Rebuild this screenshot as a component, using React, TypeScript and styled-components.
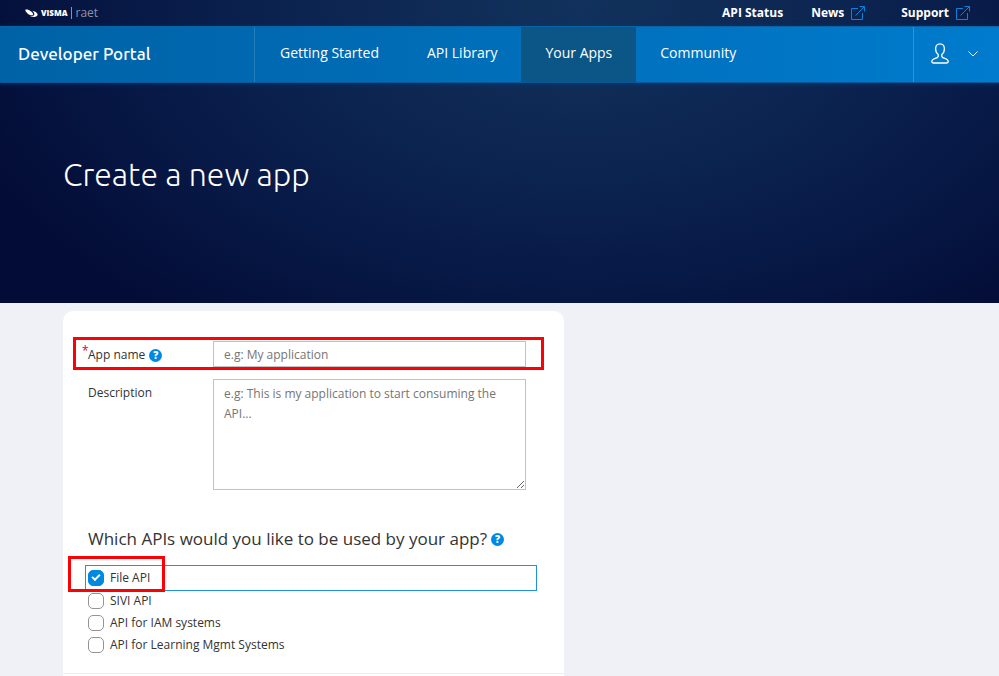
import React, { useState } from 'react';
import styled, { createGlobalStyle } from 'styled-components';

const Global = createGlobalStyle`
  *, *::before, *::after { box-sizing: border-box; }
  body {
    margin: 0;
    background: #f0f1f6;
    color: #333;
    font-family: "Open Sans", "Noto Sans", sans-serif;
    font-size: 12px;
    line-height: 20px;
  }
`;

const Page = styled.div`
  display: flex;
  flex-direction: column;
  min-height: 100vh;
`;

const Header = styled.header`
  background: radial-gradient(ellipse 65% 132% at 58% 2%, #11325c 0%, #0c2450 42%, #071845 72%, #030c36 100%);
`;

const TopBar = styled.div`
  display: flex;
  align-items: center;
  justify-content: space-between;
  height: 26px;
  padding: 0 29px 0 25px;
`;

const Brand = styled.a`
  display: flex;
  align-items: center;
  color: #fff;
  text-decoration: none;
`;

const BrandName = styled.span`
  margin-left: 3px;
  font-size: 8px;
  font-weight: 800;
  line-height: 12px;
`;

const BrandUnit = styled.span`
  margin-left: 3px;
  padding-left: 4px;
  border-left: 1px solid #8b93a9;
  color: #8b93a9;
  font-size: 12px;
  line-height: 12px;
`;

const TopLinks = styled.div`
  display: flex;
  gap: 28px;
`;

const TopLink = styled.a<{ $wide?: boolean }>`
  display: flex;
  align-items: center;
  gap: 6px;
  margin-left: ${(p) => (p.$wide ? 8 : 0)}px;
  color: #fff;
  font-weight: 700;
  text-decoration: none;
`;

const NavBar = styled.nav`
  display: flex;
  height: 57px;
  border-top: 1px solid #0a63a5;
  border-bottom: 1px solid #07599b;
  background: linear-gradient(90deg, #0062a6, #007bcd);
  box-shadow: 0 1px 5px rgba(0, 80, 150, 0.45);
`;

const PortalLink = styled.a`
  display: flex;
  align-items: center;
  width: 255px;
  padding: 0 0 2px 18px;
  border-right: 1px solid rgba(255, 255, 255, 0.14);
  color: #fff;
  font-family: Ubuntu, "Noto Sans", sans-serif;
  font-size: 17px;
  font-weight: 500;
  text-decoration: none;
`;

const NavLinks = styled.div`
  display: flex;
  padding-left: 1px;
`;

const NavLink = styled.a<{ $active?: boolean }>`
  display: flex;
  align-items: center;
  padding: 0 24px 3px;
  background: ${(p) => (p.$active ? '#0b5686' : 'transparent')};
  color: #fff;
  font-size: 14px;
  text-decoration: none;
`;

const UserButton = styled.button`
  display: flex;
  align-items: center;
  justify-content: space-between;
  width: 86px;
  margin-left: auto;
  padding: 0 21px 2px 17px;
  border: 0;
  border-left: 1px solid rgba(255, 255, 255, 0.2);
  background: transparent;
  color: #fff;
`;

const Hero = styled.div`
  height: 220px;
  padding: 69px 63px 0;
`;

const Title = styled.h1`
  margin: 0;
  color: #fff;
  font-family: Ubuntu, "Noto Sans", sans-serif;
  font-size: 32px;
  font-weight: 300;
  line-height: 44px;
`;

const Main = styled.main`
  display: flex;
  flex: 1;
  padding: 8px 24px 0 63px;
`;

const Card = styled.form`
  width: 100%;
  max-width: 501px;
  border-radius: 10px 10px 0 0;
  background: #fff;
`;

const Fields = styled.div`
  padding: 30px 38px 0 25px;
`;

const Field = styled.div`
  position: relative;
  display: grid;
  grid-template-columns: 125px 1fr;
  margin-bottom: 12px;
`;

const LabelCell = styled.div`
  display: flex;
  align-items: center;
  align-self: start;
  gap: 4px;
  padding-top: 4px;
`;

const Label = styled.label`
  position: relative;
`;

const Required = styled.span`
  position: absolute;
  top: -4px;
  left: -6px;
  color: #e3002b;
`;

const TextInput = styled.input`
  width: 100%;
  height: 26px;
  padding: 0 10px;
  border: 1px solid #c2c2c2;
  border-radius: 0;
  font: inherit;
  &::placeholder { color: #757575; }
`;

const TextArea = styled.textarea`
  display: block;
  width: 100%;
  height: 111px;
  padding: 4px 10px;
  border: 1px solid #c2c2c2;
  border-radius: 0;
  font: inherit;
  &::placeholder { color: #757575; }
`;

const HelpButton = styled.button`
  display: flex;
  align-items: center;
  justify-content: center;
  width: 13px;
  height: 13px;
  padding: 0;
  border: 0;
  border-radius: 50%;
  background: #0089e0;
  color: #fff;
  font: 800 10px/13px "Open Sans", sans-serif;
`;

const Apis = styled.section`
  padding: 24px 27px 17px 22px;
`;

const HeadingRow = styled.div`
  display: flex;
  align-items: center;
  gap: 4px;
  padding-left: 3px;
  margin-bottom: 13px;
`;

const Heading = styled.h2`
  margin: 0;
  font-size: 17px;
  font-weight: 400;
  line-height: 26px;
`;

const ApiList = styled.ul`
  margin: 0;
  padding: 0;
  list-style: none;
`;

const ApiItem = styled.li<{ $checked: boolean }>`
  position: relative;
  display: flex;
  align-items: center;
  height: ${(p) => (p.$checked ? 26 : 22)}px;
  margin-bottom: ${(p) => (p.$checked ? -1 : 0)}px;
  padding: 0 2px;
  border: 1px solid ${(p) => (p.$checked ? '#1f93de' : 'transparent')};
`;

const ApiLabel = styled.label`
  display: flex;
  align-items: center;
  gap: 6px;
`;

const Checkbox = styled.input`
  position: relative;
  appearance: none;
  width: 16px;
  height: 16px;
  margin: 0;
  border: 1px solid #949494;
  border-radius: 5px;
  background: #fff;
  &:checked {
    border-color: #0089e0;
    background: #0089e0;
  }
  &:checked::after {
    content: "";
    position: absolute;
    top: 3px;
    left: 3px;
    width: 8px;
    height: 5px;
    border: solid #fff;
    border-width: 0 0 2px 2px;
    transform: rotate(-45deg);
  }
`;

const Divider = styled.hr`
  margin: 0;
  border: 0;
  border-top: 1px solid #ededf0;
`;

/* Red frames that lie over the form to point out a field. */
const Frame = styled.span<{ $area: 'name' | 'api' }>`
  position: absolute;
  z-index: 1;
  inset: ${(p) => (p.$area === 'name' ? '-4px -18px -3px -15px' : '-10px 371px -2px -18px')};
  border: 3px solid #fd0204;
  pointer-events: none;
`;

const VismaMark = () => (
  <svg width="13" height="9" viewBox="0 0 13 9" fill="#fff" aria-hidden="true">
    <path d="M.3.8C2 .3 4 .9 5.800 2.200 7.600 3.600 8.500 5.100 7.900 5.900 7.200 6.700 4.900 6.300 3 4.900 1.400 3.700.2 2 .3.8Z" />
    <path d="M7.200 1.700c2.300.3 4.500 1.500 5.200 3 .8 1.800-.8 3.300-3.500 3.300-1.600 0-3.100-.5-4.300-1.200 2 .4 3.900.200 4.500-.8.6-1.200-.2-2.900-1.900-4.300Z" />
  </svg>
);

const ExternalIcon = () => (
  <svg width="15" height="15" viewBox="0 0 15 15" fill="none" stroke="#0b83db" aria-hidden="true">
    <path d="M8 2.500H1.500v11h11V7M5.500 9.500 14 1M9.500.5h5v5" />
  </svg>
);

const UserIcon = () => (
  <svg width="18" height="21" viewBox="0 0 18 21" fill="none" stroke="#fff" strokeWidth="1.300" aria-hidden="true">
    <path d="M9 .8C6.200.8 4.600 2.800 4.600 5.800c0 2.500 1 4.600 2.600 5.700v1.800c0 1.400-1.300 1.700-3.200 2.200C2 16.100.9 17 .8 18.400c-.1 1.100.6 1.600 1.800 1.600h12.800c1.200 0 1.900-.5 1.800-1.600-.1-1.400-1.200-2.300-3.200-2.900-1.900-.5-3.200-.8-3.200-2.200v-1.800c1.600-1.100 2.600-3.200 2.600-5.700 0-3-1.600-5-4.400-5Z" />
  </svg>
);

const ChevronIcon = () => (
  <svg width="10" height="6" viewBox="0 0 10 6" fill="none" stroke="#fff" aria-hidden="true">
    <path d="m.5.5 4.500 4.500L9.500.5" />
  </svg>
);

const navItems = ['Getting Started', 'API Library', 'Your Apps', 'Community'];
const apis = ['File API', 'SIVI API', 'API for IAM systems', 'API for Learning Mgmt Systems'];

export default function App() {
  const [selected, setSelected] = useState<string[]>(['File API']);

  const toggle = (name: string) =>
    setSelected((list) => (list.includes(name) ? list.filter((n) => n !== name) : [...list, name]));

  return (
    <Page>
      <Global />
      <Header>
        <TopBar>
          <Brand href="#home">
            <VismaMark />
            <BrandName>VISMA</BrandName>
            <BrandUnit>raet</BrandUnit>
          </Brand>
          <TopLinks>
            <TopLink href="#status">API Status</TopLink>
            <TopLink href="#news">News <ExternalIcon /></TopLink>
            <TopLink href="#support" $wide>Support <ExternalIcon /></TopLink>
          </TopLinks>
        </TopBar>
        <NavBar>
          <PortalLink href="#portal">Developer Portal</PortalLink>
          <NavLinks>
            {navItems.map((item) => (
              <NavLink key={item} href="#nav" $active={item === 'Your Apps'}>{item}</NavLink>
            ))}
          </NavLinks>
          <UserButton type="button" aria-label="Account">
            <UserIcon />
            <ChevronIcon />
          </UserButton>
        </NavBar>
        <Hero>
          <Title>Create a new app</Title>
        </Hero>
      </Header>
      <Main>
        <Card>
          <Fields>
            <Field>
              <LabelCell>
                <Label htmlFor="app-name"><Required>*</Required>App name</Label>
                <HelpButton type="button" aria-label="Help on the app name">?</HelpButton>
              </LabelCell>
              <TextInput id="app-name" placeholder="e.g: My application" />
              <Frame $area="name" />
            </Field>
            <Field>
              <LabelCell>
                <Label htmlFor="description">Description</Label>
              </LabelCell>
              <TextArea id="description" placeholder="e.g: This is my application to start consuming the API..." />
            </Field>
          </Fields>
          <Apis>
            <HeadingRow>
              <Heading>Which APIs would you like to be used by your app?</Heading>
              <HelpButton type="button" aria-label="Help on the APIs">?</HelpButton>
            </HeadingRow>
            <ApiList>
              {apis.map((name) => (
                <ApiItem key={name} $checked={selected.includes(name)}>
                  <ApiLabel>
                    <Checkbox type="checkbox" checked={selected.includes(name)} onChange={() => toggle(name)} />
                    {name}
                  </ApiLabel>
                  {name === 'File API' && <Frame $area="api" />}
                </ApiItem>
              ))}
            </ApiList>
          </Apis>
          <Divider />
        </Card>
      </Main>
    </Page>
  );
}
